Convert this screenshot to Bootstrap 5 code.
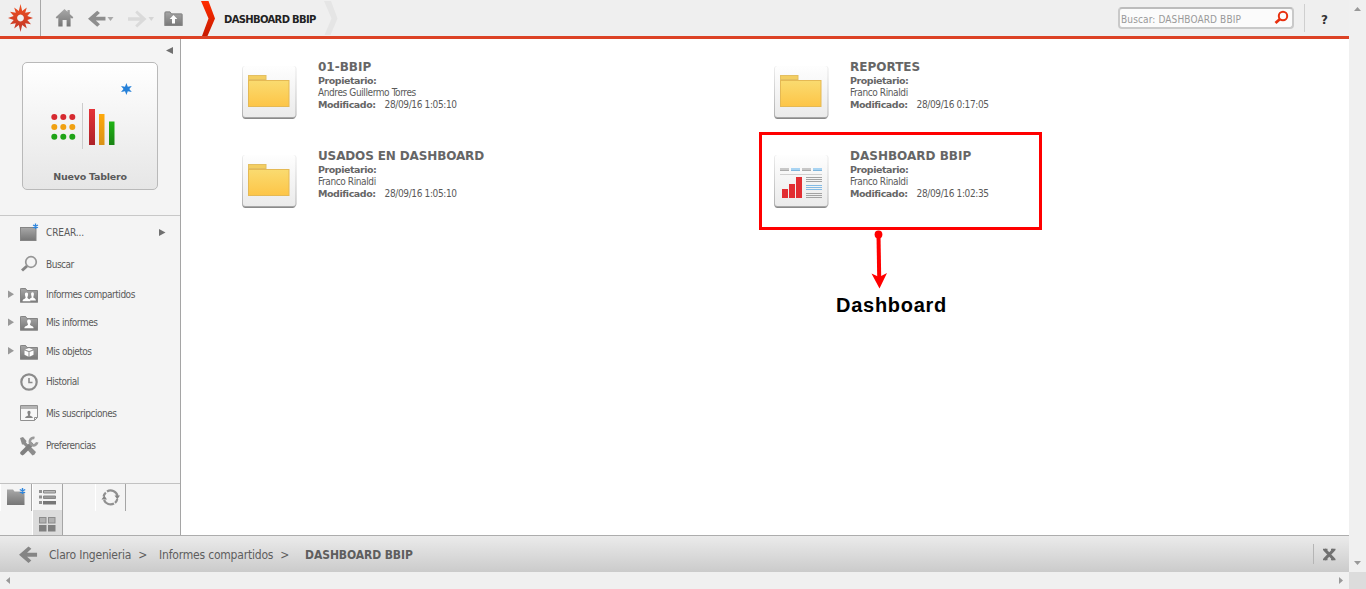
<!DOCTYPE html>
<html lang="es">
<head>
<meta charset="utf-8">
<title>DASHBOARD BBIP</title>
<link rel="stylesheet" href="https://cdn.jsdelivr.net/npm/bootstrap@5.3.0/dist/css/bootstrap.min.css">
<style>
body{width:1366px;height:589px;overflow:hidden;background:#f0f0f0;color:#5a5a5a;font:10px/12px "DejaVu Sans Condensed","DejaVu Sans",sans-serif;font-stretch:condensed}
svg{display:block;flex:none}
b,.verd{font-family:"DejaVu Sans",sans-serif;font-stretch:normal;font-weight:700}
.app-page{width:1349px;height:572px}
.top-bar{height:39px;background:#efefef;border-bottom:3px solid #dc4225}
.logo-cell{width:41px;height:36px;border-right:1px solid #a8a8a8}
.top-title{color:#222;font-size:10px;letter-spacing:-.66px}
.search-box{width:176px;height:22px;border:2px solid #c9c9c9;border-top-color:#bcbcbc;border-radius:4px;background:#fbfbfb;color:#999;padding:3px 3px 0 1px;letter-spacing:.12px}
.vline{width:1px;background:#cfcfcf}
.help-mark{font-size:12px;color:#333;margin:0 21px 0 16px}
.side-bar{width:181px;background:#f4f4f4;border-right:1px solid #a5a5a5}
.side-top{height:177px;border-bottom:1px solid #c8c8c8}
.new-board{width:136px;height:128px;margin:23px 0 0 22px;border:1px solid #b9b9b9;border-radius:5px;background:linear-gradient(#fff,#e6e6e6)}
.new-board .verd{bottom:6px;left:0;right:0;font-size:9.5px;letter-spacing:-.25px}
.side-menu{height:267px}
.side-item{padding-left:6px;letter-spacing:-.48px}
.side-item span{padding-top:1px}
.h28{height:28px}.h29{height:29px}.h31{height:31px}.h32{height:32px}.h33{height:33px}
.tools{height:52px;border-top:1px solid #c2c2c2}
.tool{height:27px;border-right:1px solid #a5a5a5;border-left:1px solid #fff}
.content-area{background:#fff;padding:19px 0 0 61px}
.items-grid{display:grid;grid-template-columns:532px 532px;grid-auto-rows:89px}
.tile-icon{margin:6px 0 0 -1px}
.item-text{margin-left:21px;letter-spacing:-.4px}
.item-title{font-size:12px;line-height:16px;letter-spacing:0;padding-top:1px;color:#666}
.item-title.wide{letter-spacing:-.13px}
.item-text b{font-size:9.5px;letter-spacing:-.46px;color:#666}
.date{margin-left:9px;letter-spacing:-.36px}
.mark-box{left:578px;top:93px;width:283px;height:98px;border:3px solid #f00}
.mark-arrow{left:689px;top:191px}
.mark-text{left:655px;top:254px;color:#000;font:700 20px/24px "Liberation Sans",sans-serif;letter-spacing:.73px}
.path-bar{height:37px;border-top:1px solid #adadad;background:linear-gradient(#ebebeb,#cbcbcb);font-size:12px;color:#5e5e5e;letter-spacing:-.2px}
.path-bar span{padding-top:1px}
.path-bar b{font-family:"DejaVu Sans Condensed",sans-serif;font-stretch:condensed;letter-spacing:-.1px;padding-top:1px}
.scroll-corner{width:17px;height:17px;background:#dcdcdc}
.v-scroll{width:17px;height:572px}
.h-scroll{width:1349px;height:17px}
</style>
</head>
<body>
<svg width="0" height="0" class="position-absolute">
<defs>
<linearGradient id="gr" x1="0" y1="0" x2="0" y2="1"><stop offset="0" stop-color="#a8a8a8"/><stop offset="1" stop-color="#767676"/></linearGradient>
<linearGradient id="ye" x1="0" y1="0" x2="0" y2="1"><stop offset="0" stop-color="#fadb70"/><stop offset="1" stop-color="#fdc547"/></linearGradient>
<linearGradient id="tile" x1="0" y1="0" x2="0" y2="1"><stop offset="0" stop-color="#fefefe"/><stop offset="1" stop-color="#ebebeb"/></linearGradient>
<linearGradient id="edge" x1="0" y1="0" x2="0" y2="1"><stop offset="0" stop-color="#eee"/><stop offset="1" stop-color="#b0b0b0"/></linearGradient>
<linearGradient id="red" x1="0" y1="0" x2="0" y2="1"><stop offset="0" stop-color="#e53238"/><stop offset="1" stop-color="#ad2228"/></linearGradient>
<linearGradient id="ora" x1="0" y1="0" x2="0" y2="1"><stop offset="0" stop-color="#ffa90a"/><stop offset="1" stop-color="#d99217"/></linearGradient>
<linearGradient id="gre" x1="0" y1="0" x2="0" y2="1"><stop offset="0" stop-color="#1fb414"/><stop offset="1" stop-color="#198314"/></linearGradient>
<linearGradient id="chev" x1="0" y1="0" x2="0" y2="1"><stop offset="0" stop-color="#ff2d00"/><stop offset="1" stop-color="#c71a00"/></linearGradient>
<linearGradient id="sun" x1="0" y1="0" x2="0" y2="1"><stop offset="0" stop-color="#f0501f"/><stop offset="1" stop-color="#bf3529"/></linearGradient>
<g id="tileBase"><rect x="1.500" y="4" width="53" height="51" rx="3" fill="#8a8a8a"/><rect x="1" y="2" width="54.500" height="51.800" rx="3" fill="url(#edge)"/><rect x="2" y="2" width="52.500" height="51" rx="2.500" fill="url(#tile)"/></g>
<g id="folderTile"><use href="#tileBase"/><rect x="7.500" y="11.500" width="17.500" height="4" fill="#f3ce62" stroke="#e3bf62"/><rect x="7.500" y="16.500" width="40.500" height="26" fill="url(#ye)" stroke="#e5b954"/></g>
<g id="folder"><path d="M0 3.500V2q0-1 1-1h4.500l1.500 2H17q1 0 1 1v11.500H0z" fill="url(#gr)"/><path d="M.5 15V2.500q0-1 1-1h4l1.500 2h10q.5 0 .5.500v11z" fill="none" stroke="#858585"/></g>
<path id="person" d="M0-4.500c1.600 0 2.100 1.300 1.800 2.600C1.600-.8 1 0 1 .8c0 1 3.600 1 3.600 3.400h-9.200C-4.600 1.800-1 1.800-1 .8-1 0-1.600-.8-1.800-1.900-2.100-3.200-1.600-4.500 0-4.500z"/>
<path id="left" d="M19 7v4.200H8.500l4.500 4-3 2.600L0 9.100 10 .4l3 2.600L8.500 7z"/>
</defs>
</svg>
<div class="d-flex">
<div class="app-page d-flex flex-column">
  <header class="top-bar d-flex align-items-center flex-shrink-0">
    <div class="logo-cell d-flex align-items-center ps-2">
      <svg width="25" height="28" viewBox="-12.500 -14 25 28"><path fill="url(#sun)" fill-rule="evenodd" d="M0-14L1.700-7 6.300-10.500 4.700-5.200 10.500-6.300 6.800-2 12.500 0 6.800 2 10.500 6.300 4.700 5.200 6.300 10.500 1.700 7 0 14-1.700 7-6.300 10.500-4.700 5.200-10.500 6.300-6.800 2-12.500 0-6.800-2-10.500-6.300-4.700-5.200-6.300-10.500-1.700-7zM0-3.400A3.400 3.400 0 1 0 .01-3.400z"/></svg>
    </div>
    <svg width="305" height="36" viewBox="41 0 305 36">
      <path fill="url(#gr)" d="M64.500 9l3 2.800V10h2.300v4l3.500 3.200-1.200 1.500-1.500-1.200V26.500h-4V20h-4v6.500h-4.300V17.500l-1.300 1.200-1.300-1.500z"/>
      <use href="#left" transform="translate(88 10.300) scale(.92)" fill="#8e8e8e"/>
      <path d="M107.500 17h6l-3 4z" fill="#aaa"/>
      <path transform="translate(146.500 10) scale(-1 1)" d="M18.500 7.200v3.600H6.500l4.800 4.700-2 2L0 9 9.300.5l2 2-4.800 4.700z" fill="#dadada"/>
      <path d="M148.500 17h5.500l-2.700 4z" fill="#d5d5d5"/>
      <use href="#folder" transform="translate(164.500 10.500)"/><path d="M173.500 15l3.800 4h-2.300v4.500h-3V19h-2.300z" fill="#fff"/>
      <path d="M201 1h7.500l6.500 17.500L207.500 36H202l6.500-17.500z" fill="url(#chev)"/>
      <path d="M324 1h7l6.500 17.500L330.500 35H324.500l7-16.500z" fill="#e5e5e5"/>
      <foreignObject x="224" y="14" width="105" height="14"><div class="verd top-title text-nowrap">DASHBOARD BBIP</div></foreignObject>
    </svg>
    <div class="search-box ms-auto d-flex align-items-center justify-content-between text-nowrap">Buscar: DASHBOARD BBIP
      <svg width="15" height="15" viewBox="0 0 15 15" class="mb-1"><circle cx="9" cy="6" r="4.200" fill="none" stroke="#e8300f" stroke-width="2"/><path d="M6 9l-4.500 4" stroke="#e8300f" stroke-width="2.800"/></svg>
    </div>
    <div class="vline align-self-stretch my-1" style="margin-left:10px"></div>
    <div class="verd help-mark pt-1">?</div>
  </header>

  <div class="d-flex flex-grow-1">
    <nav class="side-bar d-flex flex-column">
      <div class="side-top position-relative flex-shrink-0 d-flex">
        <svg class="position-absolute" width="7" height="7" style="left:166px;top:8px"><path d="M7 0v7L0 3.500z" fill="#707070"/></svg>
        <div class="new-board position-relative">
          <svg width="134" height="105" viewBox="23 63 134 105">
            <g fill="#d62a30"><circle cx="54.300" cy="117" r="3"/><circle cx="63.300" cy="117" r="3"/><circle cx="72.300" cy="117" r="3"/></g>
            <g fill="#f0a010"><circle cx="54.300" cy="127" r="3"/><circle cx="63.300" cy="127" r="3"/><circle cx="72.300" cy="127" r="3"/></g>
            <g fill="#1fa317"><circle cx="54.300" cy="136.800" r="3"/><circle cx="63.300" cy="136.800" r="3"/><circle cx="72.300" cy="136.800" r="3"/></g>
            <path d="M82.500 103v46" stroke="#ccc"/>
            <rect x="89" y="109" width="6" height="36" fill="url(#red)"/><rect x="99" y="114" width="5.500" height="31" fill="url(#ora)"/><rect x="109" y="121.500" width="5.500" height="23.500" fill="url(#gre)"/>
            <path fill="#2580d8" d="M126.400 83l1.400 3.800 4-.8-2.500 3 2.500 3-4-.8-1.400 3.800-1.400-3.800-4 .8 2.500-3-2.500-3 4 .8z"/>
          </svg>
          <div class="verd position-absolute text-center">Nuevo Tablero</div>
        </div>
      </div>
      <div class="side-menu flex-shrink-0">
        <div class="side-item h32 d-flex align-items-center"><svg width="40" height="20" viewBox="6 222 40 20"><rect x="20.500" y="227.500" width="15.500" height="13" fill="url(#gr)" stroke="#858585"/><path d="M35.500 223.500v5.500M33 225l5 2.600M33 227.600l5-2.600" stroke="#2f86dd" stroke-width="1.300"/></svg><span style="letter-spacing:-.1px">CREAR...</span><svg class="ms-auto" style="margin-right:14px" width="7" height="7"><path d="M0 0v7l6.500-3.500z" fill="#707070"/></svg></div>
        <div class="side-item h32 d-flex align-items-center"><svg width="40" height="20" viewBox="6 254 40 20"><circle cx="31" cy="262" r="5.300" fill="none" stroke="#959595" stroke-width="1.700"/><path d="M27 266l-5 4.500" stroke="#858585" stroke-width="3"/></svg><span>Buscar</span></div>
        <div class="side-item h29 d-flex align-items-center"><svg width="40" height="20" viewBox="6 285 40 20"><path d="M8 290.500v7.500l6-3.700z" fill="#999"/><use href="#folder" x="20" y="287"/><g fill="#fff"><use href="#person" transform="translate(32.500 296.500) scale(.75 .95)"/><use href="#person" transform="translate(26.500 297) scale(.85 1)"/></g></svg>Informes compartidos</div>
        <div class="side-item h28 d-flex align-items-center"><svg width="40" height="20" viewBox="6 313 40 20"><path d="M8 318.500v7.500l6-3.700z" fill="#999"/><use href="#folder" x="20" y="315"/><use href="#person" x="29" y="324" fill="#fff"/></svg>Mis informes</div>
        <div class="side-item h29 d-flex align-items-center"><svg width="40" height="20" viewBox="6 342 40 20"><path d="M8 347v7.500l6-3.700z" fill="#999"/><use href="#folder" x="20" y="344"/><path d="M29 348l4 1.500-4 1.600-4-1.600zM24.500 350.500l4 1.600v4.700l-4-2zM33.500 350.500l-4 1.600v4.700l4-2z" fill="#fff"/></svg>Mis objetos</div>
        <div class="side-item h31 d-flex align-items-center"><svg width="40" height="20" viewBox="6 371.500 40 20"><circle cx="29" cy="381.500" r="7.700" fill="none" stroke="#8b8b8b" stroke-width="2.200"/><path d="M29 377.500v4.500h3.500" fill="none" stroke="#8b8b8b" stroke-width="1.600"/></svg>Historial</div>
        <div class="side-item h32 d-flex align-items-center"><svg width="40" height="20" viewBox="6 403 40 20"><path d="M20.500 405.500h17v12l-3 3h-14z" fill="#f7f7f7" stroke="#909090"/><path d="M21 406h16v3H21z" fill="#b5b5b5"/><path d="M34.500 420.500v-3h3" fill="none" stroke="#909090"/><use href="#person" transform="translate(29 414.500) scale(.85)" fill="#858585"/></svg><span>Mis suscripciones</span></div>
        <div class="side-item h33 d-flex align-items-center"><svg width="40" height="20" viewBox="6 435.500 40 20"><path d="M20 437.500l3-1 3.500 4-.5 1.500 3.500 3.500 1.500 1 5 5-1.500 2.500-2 1-5-5.500-.5-2-3.500-3.500-1.500 0z" fill="#8d8d8d"/><path d="M22.500 452.500l8.500-8.500" stroke="#808080" stroke-width="4.500" stroke-linecap="round"/><path d="M34.500 437.500a3.700 3.700 0 1 0 2.700 4.300" fill="none" stroke="#9b9b9b" stroke-width="2.700"/></svg>Preferencias</div>
      </div>
      <div class="tools flex-shrink-0 d-flex align-items-start">
        <div class="tool" style="width:32px"><svg width="30" height="26" viewBox="1 484 30 26"><path d="M7 491.500v-2h6l1.500 2H24.500V505H7z" fill="url(#gr)"/><path d="M22.500 488v6M19.800 489.500l5.400 3M19.800 492.500l5.400-3" stroke="#2f86dd" stroke-width="1.400"/></svg></div>
        <div style="width:31px;height:51px;border-right:1px solid #a5a5a5;border-left:1px solid #fff">
          <svg width="29" height="51" viewBox="33 484 29 51"><path d="M33 510h29v25H33z" fill="#dcdcdc"/><g fill="#909090"><path d="M39 490h3v3h-3zM39 495.500h3v3h-3zM39 501h3v3h-3z"/></g><path d="M43.500 490.500h12v2.500h-12z" fill="#b8b8b8" stroke="#888"/><path d="M43.500 496h12v2.500h-12z" fill="#999" stroke="#888"/><path d="M43 501h13v3.500H43z" fill="#777"/><g stroke="#8c8c8c" fill="#b0b0b0"><rect x="39.500" y="517.500" width="6.500" height="5.500"/><rect x="48.500" y="517.500" width="6.500" height="5.500"/></g><g fill="#808080"><rect x="39" y="525" width="7.500" height="6.500"/><rect x="48" y="525" width="7.500" height="6.500"/></g></svg>
        </div>
        <div class="tool" style="width:31px;margin-left:32px"><svg width="29" height="26" viewBox="96 484 29 26"><g fill="none" stroke="#909090" stroke-width="2.200"><path d="M107 491.500a7 7 0 0 1 10.500 4.500M114 503.500a7 7 0 0 1-10-3.500"/><path d="M103.600 496.500a7 7 0 0 1 4-5M117.300 499a7 7 0 0 1-3.600 4.700" stroke-dasharray="4.500 9"/></g><path d="M114.500 495.500h5.500l-2.700 3.800zM101.500 499.500h5.500l-2.700-4z" fill="#858585"/></svg></div>
      </div>
    </nav>

    <main class="content-area flex-grow-1 position-relative">
      <div class="items-grid">
        <div class="d-flex"><svg width="56" height="56" viewBox="0 0 56 56" class="tile-icon"><use href="#folderTile"/></svg><div class="item-text"><div class="verd item-title">01-BBIP</div><b>Propietario:</b><div>Andres Guillermo Torres</div><b>Modificado:</b><span class="date">28/09/16 1:05:10</span></div></div>
        <div class="d-flex"><svg width="56" height="56" viewBox="0 0 56 56" class="tile-icon"><use href="#folderTile"/></svg><div class="item-text"><div class="verd item-title">REPORTES</div><b>Propietario:</b><div>Franco Rinaldi</div><b>Modificado:</b><span class="date">28/09/16 0:17:05</span></div></div>
        <div class="d-flex"><svg width="56" height="56" viewBox="0 0 56 56" class="tile-icon"><use href="#folderTile"/></svg><div class="item-text"><div class="verd item-title wide">USADOS EN DASHBOARD</div><b>Propietario:</b><div>Franco Rinaldi</div><b>Modificado:</b><span class="date">28/09/16 1:05:10</span></div></div>
        <div class="d-flex"><svg width="56" height="56" viewBox="0 0 56 56" class="tile-icon"><use href="#tileBase"/><g transform="translate(1 2)"><path d="M6 14.500h9M28 14.500h9" stroke="#c8c8c8" stroke-width="3"/><path d="M17 14.500h9M39 14.500h9" stroke="#a9d4f2" stroke-width="3"/><path d="M6 15.500h9M28 15.500h9" stroke="#aaa"/><path d="M17 15.500h9M39 15.500h9" stroke="#7fb6dd"/><path d="M6 19.500h42" stroke="#d0d0d0"/><path fill="#e22d32" d="M8 34h6v9H8zM15 29h6v14h-6zM22 22h6v21h-6z"/><path d="M32 22.500h16M32 24.500h16M32 26.500h16M32 38.500h16M32 40.500h16M32 42.500h16" stroke="#a3a3a3"/><path d="M32 30.500h16M32 32.500h16M32 34.500h16" stroke="#83bbe5"/></g></svg><div class="item-text"><div class="verd item-title">DASHBOARD BBIP</div><b>Propietario:</b><div>Franco Rinaldi</div><b>Modificado:</b><span class="date">28/09/16 1:02:35</span></div></div>
      </div>
      <div class="mark-box position-absolute"></div>
      <svg class="mark-arrow position-absolute" width="20" height="60" viewBox="870 230 20 60"><circle cx="878.500" cy="234.500" r="3.900" fill="red"/><path d="M878.500 235l.7 42" stroke="red" stroke-width="4"/><path d="M871.500 273.500l7.700 3.500 7.800-4-7.500 15.500z" fill="red"/></svg>
      <div class="mark-text position-absolute">Dashboard</div>
    </main>
  </div>

  <footer class="path-bar d-flex align-items-center flex-shrink-0 text-nowrap">
    <svg width="49" height="36" viewBox="0 536 49 36"><use href="#left" transform="translate(19 546) scale(.95)" fill="#858585"/></svg>
    <span>Claro Ingenieria</span><span style="margin-left:7px">&gt;</span>
    <span style="margin-left:12px">Informes compartidos</span><span style="margin-left:7px">&gt;</span>
    <b style="margin-left:16px">DASHBOARD BBIP</b>
    <div class="vline ms-auto" style="height:20px;background:#b5b5b5"></div>
    <svg width="35" height="20" viewBox="1314 544 35 20"><path d="M1324.500 549.500l9.500 10M1334 549.500l-9.500 10" stroke="#707070" stroke-width="3.200"/><path d="M1323 549.500h4.500M1331 549.500h4.500M1323 559.500h4.500M1331 559.500h4.500" stroke="#707070" stroke-width="1.500"/></svg>
  </footer>
</div>
<div class="v-scroll d-flex flex-column align-items-center justify-content-between">
  <svg width="7" height="4" style="margin-top:7px"><path d="M0 4h7L3.500 0z" fill="#999"/></svg>
  <svg width="7" height="4" style="margin-bottom:7px"><path d="M0 0h7L3.500 4z" fill="#999"/></svg>
</div>
</div>
<div class="d-flex">
  <div class="h-scroll d-flex align-items-center justify-content-between" style="padding:0 6px">
    <svg width="4" height="7"><path d="M4 0v7L0 3.500z" fill="#999"/></svg>
    <svg width="4" height="7"><path d="M0 0v7l4-3.500z" fill="#999"/></svg>
  </div>
  <div class="scroll-corner"></div>
</div>
<script src="https://cdn.jsdelivr.net/npm/bootstrap@5.3.0/dist/js/bootstrap.bundle.min.js"></script>
</body>
</html>
